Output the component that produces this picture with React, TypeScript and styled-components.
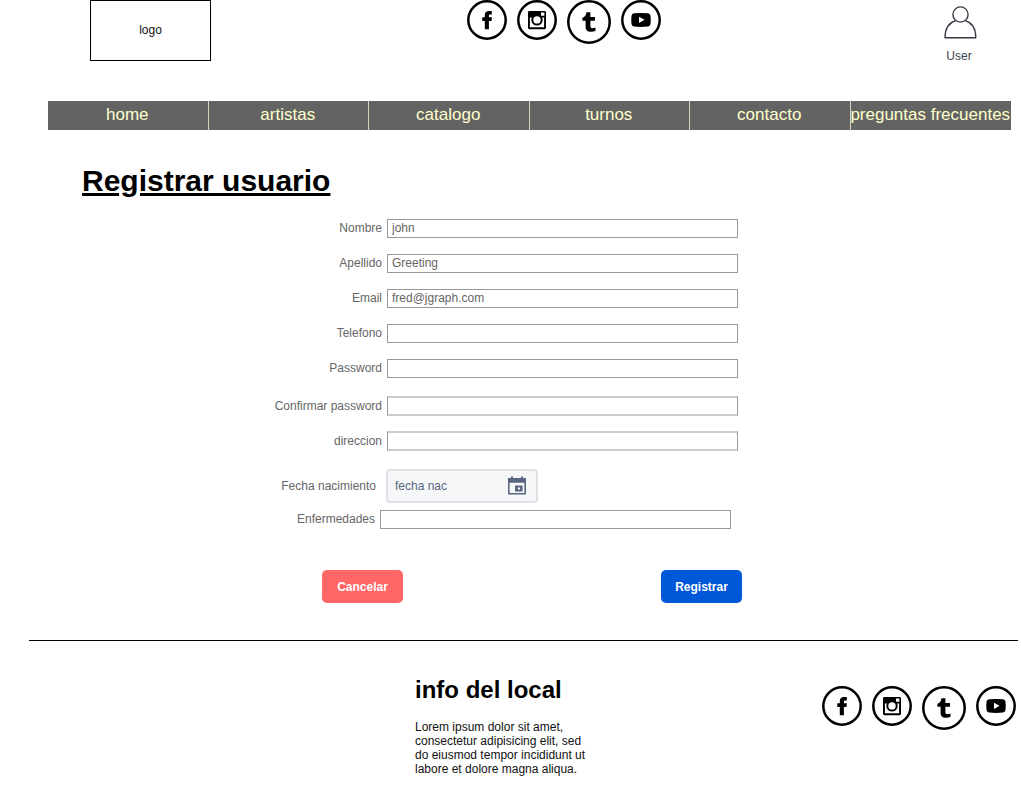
import React from "react";
import styled, { createGlobalStyle } from "styled-components";

const GlobalStyle = createGlobalStyle`
  *, *::before, *::after { box-sizing: border-box; }
  body {
    margin: 0;
    background: #fff;
    color: #000;
    font-family: "Liberation Sans", Arial, sans-serif;
    font-size: 12px;
    line-height: 14px;
  }
  button, input { font: inherit; }
`;

const Header = styled.header`
  display: grid;
  grid-template-columns: 121px 1fr 88px;
  align-items: start;
  padding: 0 17px 0 90px;
`;

const Logo = styled.a`
  display: flex;
  align-items: center;
  justify-content: center;
  height: 61px;
  padding-bottom: 2px;
  border: 1px solid #000;
  color: #111;
  text-decoration: none;
`;

const SocialList = styled.ul`
  display: flex;
  align-items: flex-start;
  justify-content: center;
  gap: 10px;
  margin: 0;
  padding: 0;
  list-style: none;
`;

const SocialLink = styled.a`
  display: block;
  color: #000;

  svg { display: block; }
`;

const UserLink = styled.a`
  display: flex;
  flex-direction: column;
  align-items: center;
  gap: 8px;
  padding: 5px 2px 0 0;
  color: #3c4454;
  text-decoration: none;

  svg { display: block; }
`;

const Nav = styled.nav`
  display: grid;
  grid-template-columns: repeat(6, minmax(0, 1fr));
  margin: 38px 10px 0 48px;
  background: #636363;
`;

const NavLink = styled.a`
  display: flex;
  justify-content: center;
  height: 29px;
  padding: 4px 1px 0 0;
  color: #ffffcc;
  font-size: 17px;
  line-height: 20px;
  white-space: nowrap;
  text-decoration: none;

  &:not(:last-child) { border-right: 1px solid #d6d6b4; }
`;

const Title = styled.h1`
  margin: 34px 0 21px 82px;
  font-size: 30px;
  line-height: 34px;
  text-decoration: underline;
`;

const Form = styled.form`
  padding-right: 11px;
`;

const FormBody = styled.div`
  width: 474px;
  max-width: 100%;
  margin: 0 auto;
`;

const Fields = styled.div`
  display: flex;
  flex-direction: column;
  gap: 16px;
`;

const SoftFields = styled(Fields)`
  gap: 15px;
  margin-top: 18px;
`;

const Row = styled.div<{ $label?: number; $gap?: number }>`
  display: grid;
  grid-template-columns: ${(p) => p.$label ?? 114}px auto;
  justify-content: start;
  align-items: center;
  column-gap: ${(p) => p.$gap ?? 5}px;
`;

const ExtraFields = styled(Fields)`
  gap: 7px;
  margin-top: 18px;
`;

const Label = styled.label`
  padding-bottom: 1px;
  color: #666;
  text-align: right;
  white-space: nowrap;
`;

const TextInput = styled.input<{ $soft?: boolean }>`
  width: 351px;
  height: ${(p) => (p.$soft ? 20 : 19)}px;
  padding: 0 4px 1px;
  border: 1px solid #999;
  border-width: ${(p) => (p.$soft ? "2px 1px" : "1px")};
  border-color: ${(p) => (p.$soft ? "#ccc #999" : "#999")};
  border-radius: 0;
  background: #fff;
  color: #666;
  outline: none;
`;

const DateField = styled.div`
  display: flex;
  align-items: center;
  width: 152px;
  height: 34px;
  padding: 0 9px 0 7px;
  border: 2px solid #dfe1e6;
  border-radius: 4px;
  background: #f5f7f9;
`;

const DateInput = styled.input`
  flex: 1;
  min-width: 0;
  padding: 0;
  border: 0;
  background: transparent;
  color: #596780;
  outline: none;

  &::placeholder { color: #596780; opacity: 1; }
`;

const CalendarButton = styled.button`
  padding: 0;
  border: 0;
  background: none;
  color: #596780;

  svg { display: block; }
`;

const Actions = styled.div`
  display: flex;
  justify-content: space-between;
  margin-top: 41px;
  padding-left: 54px;
`;

const ActionButton = styled.button<{ $color: string }>`
  width: 81px;
  height: 33px;
  padding: 1px 0 0;
  border: 0;
  border-radius: 5px;
  background: ${(p) => p.$color};
  color: #fff;
  font-weight: bold;
`;

const Divider = styled.hr`
  height: 1px;
  margin: 37px 3px 0 29px;
  border: 0;
  background: #000;
`;

const Footer = styled.footer`
  display: grid;
  grid-template-columns: 1fr 186px 1fr;
  align-items: start;
  padding: 35px 5px 16px 0;
`;

const Info = styled.section`
  grid-column: 2;
`;

const InfoTitle = styled.h2`
  margin: 0 0 16px;
  font-size: 24px;
  line-height: 28px;
  white-space: nowrap;
`;

const InfoText = styled.p`
  max-width: 176px;
  margin: 0;
  color: #111;
`;

const FooterSocial = styled.div`
  justify-self: end;
  padding-top: 10px;
`;

function Ring({ size, children }: { size: number; children: React.ReactNode }) {
  return (
    <svg width={size} height={size} viewBox={`0 0 ${size} ${size}`} aria-hidden="true">
      <circle cx={size / 2} cy={size / 2} r={size / 2 - 1.3} fill="none" stroke="currentColor" strokeWidth="2.5" />
      {children}
    </svg>
  );
}

const networks = [
  {
    name: "Facebook",
    icon: (
      <Ring size={40}>
        <path
          d="M17.8 29.2V21H15.3V17.3H17.8V15.3C17.8 12.3 19.4 11 22.2 11H24.8V14.6H23.2C22.2 14.6 21.9 15 21.9 15.9V17.3H24.9L24.5 21H21.9V29.2Z"
          fill="currentColor"
        />
      </Ring>
    ),
  },
  {
    name: "Instagram",
    icon: (
      <Ring size={40}>
        <path
          fillRule="evenodd"
          d="M12.4 11H27.6Q29 11 29 12.4V27.8Q29 29.2 27.6 29.2H12.4Q11 29.2 11 27.8V12.4Q11 11 12.4 11ZM24 12.4V15.8H27.4V12.4ZM12.9 17.5V27.2H27.1V17.5H25V20H15V17.5Z"
          fill="currentColor"
        />
        <circle cx="20" cy="19.9" r="4.7" fill="#fff" stroke="currentColor" strokeWidth="2" />
      </Ring>
    ),
  },
  {
    name: "Tumblr",
    icon: (
      <Ring size={44}>
        <path
          d="M19.4 12.3H23.4V17H28V20.8H23.4V25.8C23.4 27.6 24.2 28.2 25.5 28.2C26.6 28.2 27.6 27.9 28.5 27.4V30.8C27.2 31.5 25.8 31.8 24.1 31.8C20.6 31.8 18.6 30.2 18.6 26.7V20.8H15.4V17.7C18 17 19.1 15.2 19.4 12.3Z"
          fill="currentColor"
        />
      </Ring>
    ),
  },
  {
    name: "YouTube",
    icon: (
      <Ring size={40}>
        <path
          fillRule="evenodd"
          d="M13 13.3Q20 12.7 27 13.3Q29.2 13.5 29.5 15.8Q30 20 29.5 24.1Q29.2 26.4 27 26.6Q20 27.2 13 26.6Q10.8 26.4 10.5 24.1Q10 20 10.5 15.8Q10.8 13.5 13 13.3ZM18 16.7V22.9L23.6 19.8Z"
          fill="currentColor"
        />
      </Ring>
    ),
  },
];

function SocialLinks() {
  return (
    <SocialList>
      {networks.map((n) => (
        <li key={n.name}>
          <SocialLink href="#" aria-label={n.name}>
            {n.icon}
          </SocialLink>
        </li>
      ))}
    </SocialList>
  );
}

function UserIcon() {
  return (
    <svg width="36" height="36" viewBox="-2 0 36 36" fill="none" stroke="#363b46" strokeWidth="1.4" aria-hidden="true">
      <circle cx="17.5" cy="9.5" r="7.6" />
      <path d="M12.8 15.6C6 17.6 2 23.5 2 32.8H32.8C32.8 23.5 29 17.6 22.2 15.6" strokeLinejoin="round" />
    </svg>
  );
}

function CalendarIcon() {
  return (
    <svg width="20" height="20" viewBox="0 0 20 20" aria-hidden="true">
      <path
        fillRule="evenodd"
        d="M1 2H4V.4H6V2H14V.4H16V2H19V18.6H1ZM2.6 6.8V17H17.4V6.8ZM8 9.4H15.6V15.4H8ZM10.8 11.4V13.4H13V11.4Z"
        fill="currentColor"
      />
    </svg>
  );
}

const sections = ["home", "artistas", "catalogo", "turnos", "contacto", "preguntas frecuentes"];

const mainFields = [
  { id: "nombre", label: "Nombre", type: "text", value: "john" },
  { id: "apellido", label: "Apellido", type: "text", value: "Greeting" },
  { id: "email", label: "Email", type: "email", value: "fred@jgraph.com" },
  { id: "telefono", label: "Telefono", type: "tel", value: "" },
  { id: "password", label: "Password", type: "password", value: "" },
];

const softFields = [
  { id: "confirmar", label: "Confirmar password", type: "password" },
  { id: "direccion", label: "direccion", type: "text" },
];

export default function App() {
  return (
    <>
      <GlobalStyle />
      <Header>
        <Logo href="#">logo</Logo>
        <SocialLinks />
        <UserLink href="#">
          <UserIcon />
          User
        </UserLink>
      </Header>
      <Nav>
        {sections.map((s) => (
          <NavLink key={s} href="#">
            {s}
          </NavLink>
        ))}
      </Nav>
      <main>
        <Title>Registrar usuario</Title>
        <Form onSubmit={(e) => e.preventDefault()}>
          <FormBody>
            <Fields>
              {mainFields.map((f) => (
                <Row key={f.id}>
                  <Label htmlFor={f.id}>{f.label}</Label>
                  <TextInput id={f.id} type={f.type} defaultValue={f.value} />
                </Row>
              ))}
            </Fields>
            <SoftFields>
              {softFields.map((f) => (
                <Row key={f.id}>
                  <Label htmlFor={f.id}>{f.label}</Label>
                  <TextInput id={f.id} type={f.type} $soft />
                </Row>
              ))}
            </SoftFields>
            <ExtraFields>
              <Row $label={108} $gap={10}>
                <Label htmlFor="fecha">Fecha nacimiento</Label>
                <DateField>
                  <DateInput id="fecha" type="text" placeholder="fecha nac" />
                  <CalendarButton type="button" aria-label="Abrir calendario">
                    <CalendarIcon />
                  </CalendarButton>
                </DateField>
              </Row>
              <Row $label={107}>
                <Label htmlFor="enfermedades">Enfermedades</Label>
                <TextInput id="enfermedades" type="text" />
              </Row>
            </ExtraFields>
            <Actions>
              <ActionButton type="button" $color="#ff6666">
                Cancelar
              </ActionButton>
              <ActionButton type="submit" $color="#0057d8">
                Registrar
              </ActionButton>
            </Actions>
          </FormBody>
        </Form>
      </main>
      <Divider />
      <Footer>
        <Info>
          <InfoTitle>info del local</InfoTitle>
          <InfoText>
            Lorem ipsum dolor sit amet, consectetur adipisicing elit, sed do eiusmod tempor incididunt ut labore et
            dolore magna aliqua.
          </InfoText>
        </Info>
        <FooterSocial>
          <SocialLinks />
        </FooterSocial>
      </Footer>
    </>
  );
}
